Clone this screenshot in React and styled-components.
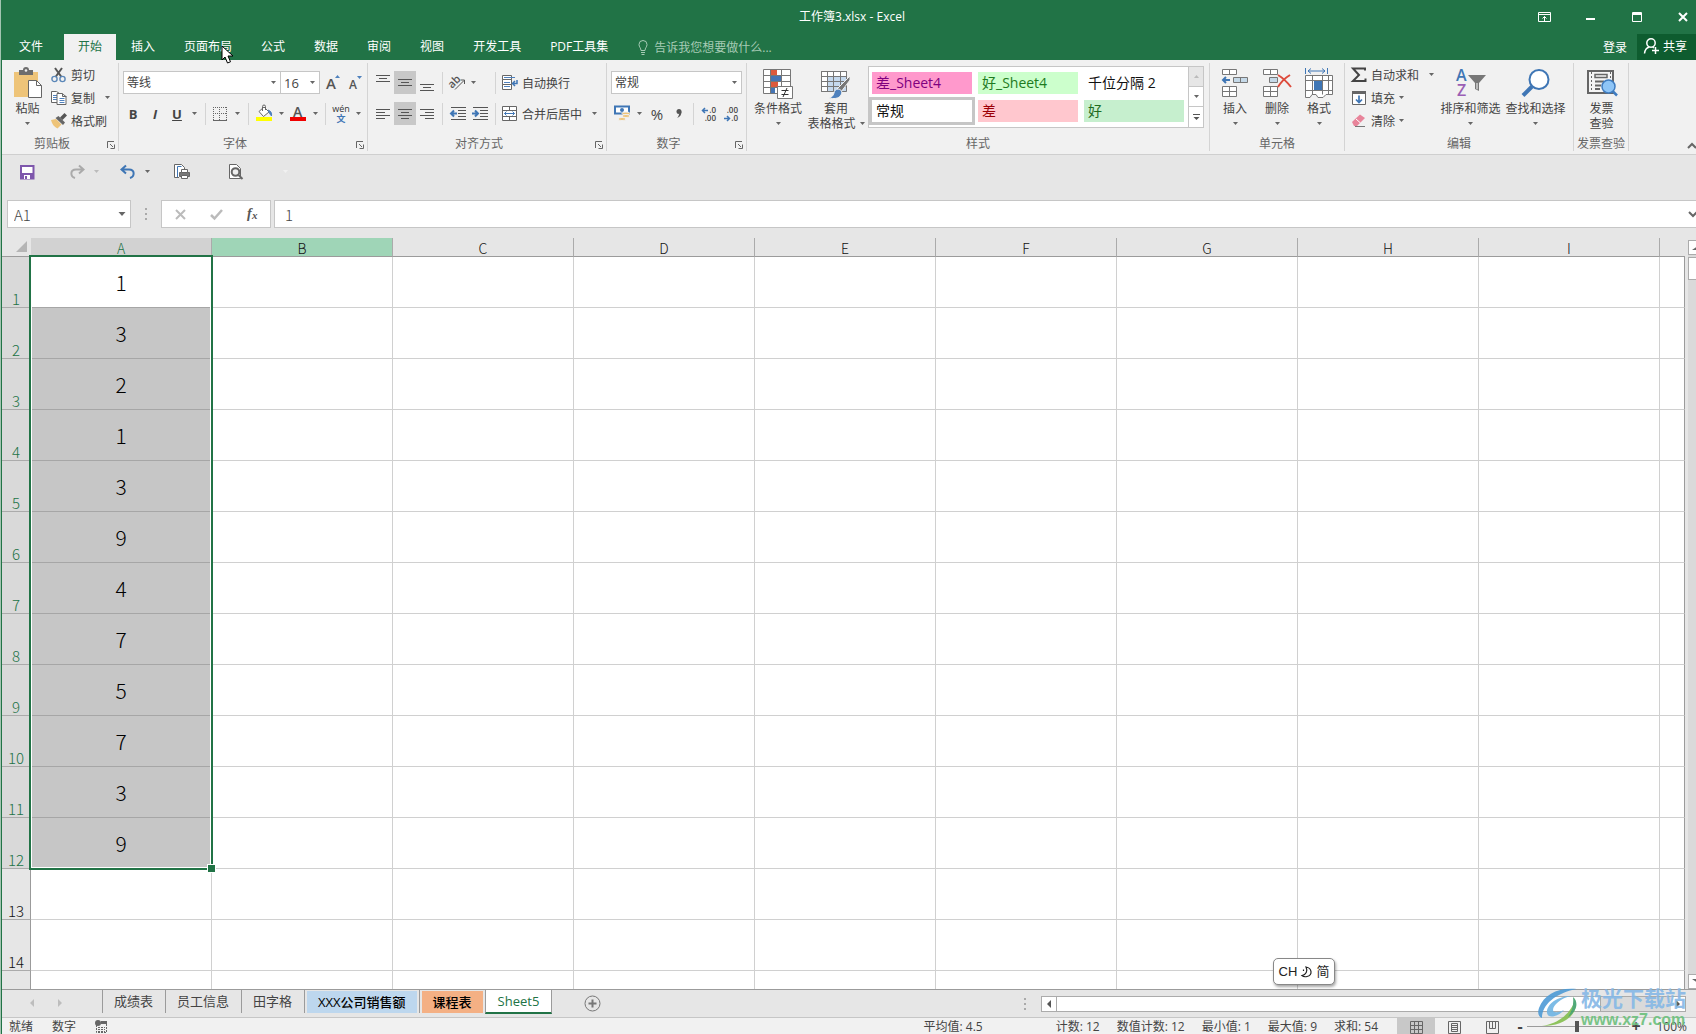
import React, { useState } from "react";
import styled, { createGlobalStyle, css } from "styled-components";

const UI_FONT = `"Open Sans", "Noto Sans CJK SC", sans-serif`;
const CELL_FONT = `"Noto Sans CJK SC", "Noto Sans", sans-serif`;

const GlobalStyle = createGlobalStyle`
  * {
    box-sizing: border-box;
  }
  body {
    margin: 0;
    font-family: ${UI_FONT};
    font-size: 12px;
    color: #444;
    background: #a3c4b1;
    overflow: hidden;
  }
  button, input, select {
    font: inherit;
    color: inherit;
    margin: 0;
    padding: 0;
    border: 0;
    background: none;
    border-radius: 0;
    outline: none;
  }
  svg {
    display: block;
    flex: none;
    overflow: visible;
  }
`;

const Window = styled.div`
  position: relative;
  display: flex;
  flex-direction: column;
  height: 100vh;
  margin-left: 1px;
  overflow: hidden;
  border-left: 1px solid #217346;
  background: #e6e6e6;
`;

/* ---------- title bar and tabs ---------- */

const TitleBar = styled.header`
  display: grid;
  grid-template-columns: 1fr auto 1fr;
  align-items: center;
  height: 34px;
  padding-left: 6px;
  background: #217346;
  color: #fff;
`;

const Title = styled.h1`
  grid-column: 2;
  margin: 0;
  font-size: 12px;
  font-weight: 400;
  line-height: 16px;
`;

const WindowButtons = styled.div`
  display: flex;
  justify-content: flex-end;
`;

const WindowButton = styled.button`
  display: flex;
  justify-content: center;
  align-items: center;
  width: 46px;
  height: 32px;
`;

const CloseButton = styled(WindowButton)`
  justify-content: flex-end;
  width: 36px;
  padding-right: 8px;
`;

const TabBar = styled.nav`
  display: flex;
  height: 26px;
  gap: 1px;
  background: #217346;
  color: #fff;
`;

const Tab = styled.button`
  padding: 0 14px 2px;
  white-space: nowrap;
  ${(p) =>
    p.$active &&
    css`
      background: #f1f1f1;
      color: #217346;
    `}
`;

const FileTab = styled(Tab)`
  padding: 0 20px 2px 17px;
`;

const TellMe = styled.label`
  display: flex;
  flex: 1;
  align-items: center;
  gap: 6px;
  padding-left: 15px;
  color: #a6cbb5;

  input {
    width: 160px;
  }
  input::placeholder {
    color: #a6cbb5;
    opacity: 1;
  }
`;

const ShareButton = styled.button`
  display: flex;
  align-items: center;
  gap: 4px;
  padding: 0 9px 2px 7px;
  background: #0e5c2f;
`;

const SignIn = styled.button`
  padding: 0 9px 1px;
`;

/* ---------- ribbon ---------- */

const Ribbon = styled.section`
  display: flex;
  height: 95px;
  background: #f1f1f1;
  border-bottom: 1px solid #cfcfcf;
`;

const GroupBox = styled.div`
  display: flex;
  flex-direction: column;
  flex: none;
  width: ${(p) => p.$w}px;
  margin: 3px 0;
  border-right: 1px solid #d4d4d4;
`;

const GroupBody = styled.div`
  display: flex;
  flex: 1;
  padding-left: ${(p) => p.$left || 4}px;
`;

const GroupFooter = styled.div`
  display: flex;
  height: 15px;
  align-items: center;
`;

const GroupName = styled.span`
  flex: 1;
  text-align: center;
  line-height: 15px;
  color: #666;
  white-space: nowrap;
`;

const Launcher = styled.button`
  width: 16px;
  padding: 3px 0 0 5px;
`;

const ToolRows = styled.div`
  display: flex;
  flex-direction: column;
  gap: 8px;
  padding-top: 8px;
`;

const ToolRow = styled.div`
  display: flex;
  align-items: center;
  height: 23px;
`;

const Tool = styled.button`
  display: flex;
  align-items: center;
  justify-content: center;
  flex: none;
  width: ${(p) => p.$w || 22}px;
  height: 23px;
  background: ${(p) => (p.$on ? "#c8c8c8" : "none")};
`;

const Letter = styled(Tool)`
  font-size: 13px;
  font-weight: 700;
  font-style: ${(p) => (p.$italic ? "italic" : "normal")};
  text-decoration: ${(p) => (p.$underline ? "underline" : "none")};
`;

const Percent = styled(Tool)`
  font-size: 15px;
`;

const OrientGroup = styled.div`
  display: flex;
  width: 44px;
`;

const Sep = styled.span`
  flex: none;
  width: 1px;
  height: 22px;
  margin: 0 4px;
  background: #d4d4d4;
`;

const LabelTool = styled.button`
  display: flex;
  align-items: center;
  gap: 4px;
  height: 23px;
  padding-left: 2px;
  white-space: nowrap;
`;

const SmallColumn = styled.div`
  display: flex;
  flex-direction: column;
  align-items: flex-start;
  flex: none;
  width: ${(p) => p.$w}px;
`;

const BigButton = styled.button`
  display: flex;
  flex-direction: column;
  align-items: center;
  flex: none;
  width: ${(p) => p.$w}px;
  height: 68px;
  line-height: 15px;
  white-space: nowrap;
`;

const BigIcon = styled.span`
  display: flex;
  align-items: center;
  justify-content: center;
  height: 38px;
  padding-top: 2px;
`;

const LabelLine = styled.span`
  display: flex;
  align-items: center;
  gap: 4px;
  height: 15px;
`;

const SelectBox = styled.div`
  display: grid;
  flex: none;
  width: ${(p) => p.$w}px;
  height: 23px;
  margin-right: -1px;
  border: 1px solid #c6c6c6;
  background: #fff;

  select {
    grid-area: 1 / 1;
    appearance: none;
    padding-left: 3px;
    font-size: ${(p) => p.$size || 12}px;
  }
  svg {
    grid-area: 1 / 1;
    place-self: center end;
    margin-right: 4px;
    pointer-events: none;
  }
`;

const Gallery = styled.div`
  display: flex;
  flex: none;
  margin: 3px 0 0 2px;
  height: 62px;
  border: 1px solid #c6c6c6;
  background: #fff;
`;

const StyleGrid = styled.div`
  display: grid;
  grid-template-columns: repeat(3, 106px);
  grid-template-rows: repeat(2, 28px);
  padding: 2px 1px 2px 0;
`;

const StyleItem = styled.button`
  padding-left: 4px;
  border: 3px solid ${(p) => (p.$selected ? "#c6c6c6" : "#fff")};
  background: ${(p) => p.$bg};
  color: ${(p) => p.$fg};
  font-size: 14px;
  line-height: 20px;
  text-align: left;
`;

const GalleryButtons = styled.div`
  display: grid;
  grid-template-rows: repeat(3, 20px);
  width: 15px;
`;

const GalleryButton = styled.button`
  display: flex;
  align-items: center;
  justify-content: center;
  border-left: 1px solid #c6c6c6;
  border-bottom: 1px solid #c6c6c6;
  background: ${(p) => (p.$dim ? "#e6e6e6" : "#fff")};

  &:last-child {
    border-bottom: 0;
  }
`;

const Collapse = styled.button`
  margin-left: auto;
  align-self: flex-end;
  padding: 0 0 5px;
`;

/* ---------- quick access and formula bar ---------- */

const QuickAccess = styled.div`
  display: flex;
  align-items: center;
  height: 45px;
  padding: 0 0 12px 10px;
`;

const QuickItem = styled.div`
  display: flex;
  margin-right: ${(p) => p.$gap || 0}px;
`;

const FormulaBar = styled.div`
  display: flex;
  height: 28px;
  padding-left: 5px;
`;

const NameBox = styled.div`
  display: flex;
  align-items: center;
  width: 124px;
  border: 1px solid #c6c6c6;
  background: #fff;

  input {
    flex: 1;
    min-width: 0;
    padding-left: 6px;
    font-size: 15px;
    font-family: ${CELL_FONT};
    font-weight: 300;
  }
  svg {
    margin-right: 4px;
  }
`;

const Dots = styled.div`
  display: flex;
  flex-direction: column;
  justify-content: center;
  align-items: center;
  gap: 3px;
  width: ${(p) => p.$w}px;

  i {
    width: 2px;
    height: 2px;
    background: #aaa;
  }
`;

const FormulaButtons = styled.div`
  display: flex;
  align-items: center;
  width: 110px;
  border: 1px solid #c6c6c6;
  background: #fff;
`;

const FormulaField = styled.div`
  display: flex;
  flex: 1;
  align-items: center;
  margin-left: 3px;
  border: 1px solid #c6c6c6;
  border-right: 0;
  background: #fff;

  input {
    flex: 1;
    padding-left: 10px;
    font-size: 15px;
    font-family: ${CELL_FONT};
    font-weight: 300;
  }
`;

/* ---------- sheet ---------- */

const SheetArea = styled.main`
  display: flex;
  flex: 1;
  min-height: 0;
  padding-top: 10px;
`;

const GridPane = styled.div`
  position: relative;
  flex: 1;
  min-width: 0;
  overflow: hidden;
`;

const SheetTable = styled.table`
  width: 100%;
  height: 100%;
  table-layout: fixed;
  border-collapse: separate;
  border-spacing: 0;
  font-family: ${CELL_FONT};
  font-weight: 300;
`;

const Corner = styled.td`
  width: 29px;
  height: 19px;
  padding: 0 4px 4px 0;
  border-bottom: 1px solid #9b9b9b;
  vertical-align: bottom;

  svg {
    margin-left: auto;
  }
`;

const ColumnHead = styled.th`
  width: ${(p) => (p.$rest ? "auto" : "181px")};
  height: 19px;
  padding: 2px 0 0;
  border-right: ${(p) => (p.$rest ? 0 : 1)}px solid #ababab;
  border-bottom: 1px solid #9b9b9b;
  background: ${(p) => p.$bg || "#e6e6e6"};
  color: ${(p) => p.$fg || "#111"};
  font-size: 14px;
  font-weight: 300;
  line-height: 16px;
`;

const RowHead = styled.th`
  height: 51px;
  padding: 0;
  border-right: 1px solid #9b9b9b;
  border-bottom: 1px solid #ababab;
  background: ${(p) => (p.$selected ? "#d9d9d9" : "#e6e6e6")};
  color: ${(p) => (p.$selected ? "#217346" : "#111")};
  font-size: 15px;
  font-weight: 300;
  line-height: 16px;
  vertical-align: bottom;
`;

const Cell = styled.td`
  height: 51px;
  padding: 0;
  border-right: 1px solid #d0d0d0;
  border-bottom: 1px solid ${(p) => (p.$selected ? "#a6a6a6" : "#d0d0d0")};
  background: ${(p) => (p.$selected && !p.$current ? "#c6c6c6" : "#fff")};
  color: #000;
  font-size: 21px;
  line-height: 30px;
  text-align: center;

  &:last-child {
    border-right-color: #9b9b9b;
  }
`;

const RestHead = styled(RowHead)`
  height: auto;
  border-bottom: 0;
`;

const RestCell = styled(Cell)`
  height: auto;
  border-bottom: 0;
`;

const Selection = styled.div`
  position: absolute;
  left: 27px;
  top: 17px;
  width: 184px;
  height: ${(p) => p.$rows * 51 + 3}px;
  border: 2px solid #217346;
  pointer-events: none;

  &::before {
    content: "";
    position: absolute;
    inset: 0;
    border: 1px solid #fff;
  }
  &::after {
    content: "";
    position: absolute;
    right: -5px;
    bottom: -5px;
    width: 7px;
    height: 7px;
    border: 1px solid #fff;
    background: #217346;
  }
`;

const VScroll = styled.div`
  display: flex;
  flex-direction: column;
  flex: none;
  width: 8px;
  margin: 2px 0 0 3px;
  background: #dadada;
`;

const VButton = styled.button`
  height: 15px;
  border: 1px solid #ababab;
  border-right: 0;
  background: #fff;
  overflow: hidden;
`;

const VThumb = styled.div`
  height: 23px;
  margin: 2px 0 auto;
  border: 1px solid #ababab;
  border-right: 0;
  background: #fff;
`;

const SheetStrip = styled.div`
  display: flex;
  height: 28px;
  border-top: 1px solid #9b9b9b;
`;

const SheetNav = styled.div`
  display: flex;
  align-items: center;
  gap: 24px;
  width: 100px;
  padding: 0 0 2px 28px;
`;

const SheetTab = styled.button`
  height: 23px;
  padding: 0 12px 1px 11px;
  border-left: 1px solid #9b9b9b;
  font-size: 13px;
  line-height: 22px;
  white-space: nowrap;

  ${(p) =>
    p.$bg &&
    css`
      padding: 0 2px;
      color: #000;
      font-weight: 500;

      span {
        display: block;
        padding: 0 11px;
        background: ${p.$bg};
      }
    `}

  ${(p) =>
    p.$active &&
    css`
      height: 24px;
      padding: 0 12px;
      border-right: 1px solid #9b9b9b;
      border-bottom: 2px solid #217346;
      background: #fff;
      color: #217346;
    `}
`;

const AddSheet = styled.button`
  display: flex;
  align-items: center;
  margin-left: 32px;
`;

const SheetSpacer = styled.div`
  flex: 1;
`;

const HScroll = styled.div`
  display: flex;
  width: 645px;
  height: 16px;
  margin: 6px 10px 0 8px;
  border: 1px solid #ababab;
  background: #dadada;
`;

const HButton = styled.button`
  display: flex;
  align-items: center;
  justify-content: center;
  width: 14px;
  background: #fff;
`;

const HThumb = styled.div`
  width: 545px;
  margin-right: auto;
  border: 0 solid #ababab;
  border-width: 0 1px;
  background: #fff;
`;

const StatusBar = styled.footer`
  display: flex;
  align-items: center;
  height: 17px;
  padding: 0 9px 0 7px;
  border-top: 1px solid #c6c6c6;
  background: #f1f1f1;
  line-height: 16px;
  white-space: nowrap;
`;

const StatusText = styled.span`
  padding-top: 2px;
`;

const Mode = styled(StatusText)`
  margin-right: 19px;
`;

const Stats = styled.div`
  display: flex;
  gap: 17px;
  margin-left: auto;
  padding-right: 19px;
`;

const Average = styled(StatusText)`
  margin-right: 56px;
`;

const ViewButton = styled.button`
  display: flex;
  align-items: center;
  justify-content: center;
  width: 38px;
  height: 16px;
  padding-top: 2px;
  background: ${(p) => (p.$on ? "#c8c8c8" : "none")};
`;

const ZoomControl = styled.div`
  display: flex;
  align-items: center;
  margin-left: 4px;
`;

const ZoomButton = styled.button`
  width: 10px;
  font-size: 16px;
  font-weight: 700;
  line-height: 16px;
`;

const ZoomSlider = styled.input`
  appearance: none;
  width: 102px;
  height: 16px;
  margin: 0 2px;
  background: linear-gradient(#9b9b9b, #9b9b9b) center / 100% 1px no-repeat;

  &::-webkit-slider-thumb {
    appearance: none;
    width: 4px;
    height: 11px;
    background: #555;
  }
`;

const ZoomValue = styled.button`
  width: 46px;
  padding-top: 2px;
  text-align: right;
  font-size: 12px;
`;

/* ---------- things floating over the window ---------- */

const Pointer = styled.svg`
  position: absolute;
  left: 219px;
  top: 45px;
`;

const ImeBadge = styled.div`
  position: absolute;
  right: 361px;
  bottom: 49px;
  display: flex;
  align-items: center;
  justify-content: center;
  gap: 4px;
  width: 62px;
  height: 27px;
  border: 1px solid #888;
  border-radius: 5px;
  background: #fff;
  box-shadow: 1px 2px 3px rgba(0, 0, 0, 0.35);
  color: #222;
  font: 13px/20px "Liberation Sans", "Noto Sans CJK SC", sans-serif;
`;

const Watermark = styled.div`
  position: absolute;
  right: 10px;
  bottom: 6px;
  display: flex;
  align-items: flex-end;
  gap: 2px;
  pointer-events: none;
`;

const WatermarkText = styled.div`
  display: flex;
  flex-direction: column;
  gap: 2px;
  color: #86b8e6;
  font: 700 21px/24px "Noto Sans CJK SC", sans-serif;
  opacity: 0.9;

  span:last-child {
    color: #6cc07c;
    font: 700 16px/17px "Liberation Sans", sans-serif;
  }
`;

/* ---------- icons ---------- */

const Icon = ({ w = 16, h = w, children, ...rest }) => (
  <svg width={w} height={h} viewBox={`0 0 ${w} ${h}`} fill="none" stroke="#666" aria-hidden="true" {...rest}>
    {children}
  </svg>
);

const Caret = ({ color = "#666", big }) => (
  <Icon w={big ? 8 : 5} h={big ? 4 : 3} stroke="none">
    <path d={big ? "M0.5 0h7L4 4z" : "M0 0h5L2.5 3z"} fill={color} />
  </Icon>
);

// each row is [y, x1, x2]
const Lines = ({ rows }) => (
  <Icon>
    {rows.map(([y, x1, x2]) => (
      <path key={y} d={`M${x1} ${y + 0.5}H${x2}`} stroke="#555" />
    ))}
  </Icon>
);

const PasteIcon = () => (
  <Icon w={30} h={32}>
    <path d="M1 5h24v25H1z" fill="#eec479" stroke="none" />
    <path d="M6 3h4a3 3 0 0 1 6 0h4v5H6z" fill="#6d6d6d" stroke="none" />
    <circle cx="13" cy="3.5" r="1.3" fill="#f1f1f1" stroke="none" />
    <path d="M15.5 13.5h8l5 5v12h-13z" fill="#fff" />
    <path d="M23.5 13.5v5h5" />
  </Icon>
);

const CutIcon = () => (
  <Icon>
    <path d="M4 1l6.5 9M11 1L4.5 10" stroke="#555" strokeWidth="2" />
    <circle cx="3.5" cy="12" r="2.6" stroke="#5b87b8" strokeWidth="1.4" />
    <circle cx="11.5" cy="12" r="2.6" stroke="#5b87b8" strokeWidth="1.4" />
  </Icon>
);

const CopyIcon = () => (
  <Icon>
    <path d="M0.5 1.5h5l3 2v9h-8z" fill="#fff" />
    <path d="M2 5.5h4M2 7.5h4M2 9.5h4" stroke="#4f81bd" />
    <path d="M6 3.5h5l4 3v8h-9z" fill="#fff" />
    <path d="M11.5 3.5v3h4" />
    <path d="M8.5 8.5h5M8.5 10.5h5M8.5 12.5h5" stroke="#4f81bd" />
  </Icon>
);

const BrushIcon = () => (
  <Icon stroke="none">
    <path d="M0 7l5-1 5.500 5.500-4 4C3 14 1 11 0 7z" fill="#eec479" />
    <path d="M4.500 5l3-2 6.500 6.500-2 2.500z" fill="#666" />
    <path d="M9 4.500l4.500-4.500 2.500 2.500-4.500 4.500z" fill="#555" />
  </Icon>
);

const LauncherIcon = () => (
  <Icon w={8}>
    <path d="M0.5 7V0.5H7M3 3l3 3M7.500 3.500v4h-4" />
  </Icon>
);

const GrowIcon = ({ down }) => (
  <Icon w={16} h={18} stroke="none">
    <text x="1" y="15" fontSize={down ? 12 : 15} fontWeight="600" fill="#555">A</text>
    <path d={down ? "M9 2h5l-2.500 3z" : "M10 4h5l-2.500-3z"} fill="#4f81bd" />
  </Icon>
);

const BorderIcon = () => (
  <Icon w={14} stroke="#666" strokeDasharray="1 1">
    <path d="M0 0.5h14M0 6.500h14M0.5 0v13M6.500 0v13M13.500 0v13" />
    <path d="M0 13.500h14" strokeDasharray="none" />
  </Icon>
);

const FillColorIcon = () => (
  <Icon w={17}>
    <path d="M3 6.500l5-4.500 5 5-5.500 4.500z" fill="#fff" />
    <path d="M6.500 6V1.500a1.500 1.500 0 0 1 3 0V5" />
    <path d="M12 5c3 1 4 3 3.500 6-1-1.500-2-2-2.500-4z" fill="#4f81bd" stroke="#4f81bd" />
    <path d="M0 12h16v4H0z" fill="#ffff00" stroke="none" />
  </Icon>
);

const FontColorIcon = () => (
  <Icon w={17} stroke="none">
    <text x="3" y="11.500" fontSize="14" fontWeight="600" fill="#555">A</text>
    <path d="M0 12h16v4H0z" fill="#f00000" />
  </Icon>
);

const PinyinIcon = () => (
  <Icon w={20} h={18} stroke="none">
    <text x="10" y="7" fontSize="9" textAnchor="middle" fill="#333">wén</text>
    <text x="10" y="17" fontSize="9" fontWeight="700" textAnchor="middle" fill="#3f76b5">文</text>
  </Icon>
);

const OrientIcon = () => (
  <Icon w={17} h={17}>
    <text x="0" y="12" fontSize="11" fontWeight="600" fill="#555" stroke="none" transform="rotate(-45 5 10)">ab</text>
    <path d="M6 15.500l9-9M11.500 6h4v4" stroke="#555" />
  </Icon>
);

const IndentIcon = ({ inc }) => (
  <Icon>
    <path d="M1 1.500h15M8 4.500h8M8 7.500h8M8 10.500h8M1 13.500h15" stroke="#555" />
    <path d={inc ? "M0 7.500h5M3 4.500l3 3-3 3" : "M7 7.500H2M4 4.500l-3 3 3 3"} stroke="#3f76b5" strokeWidth="2" />
  </Icon>
);

const WrapIcon = () => (
  <Icon>
    <path d="M0.5 0.5h9v4h-9zM0.5 4.500h9v5h-9zM0.5 9.500h9v5h-9z" fill="#fff" />
    <path d="M2 2.500h11M2 7.500h6M2 11.500h6" stroke="#4f81bd" />
    <path d="M15 5v3.500h-4M13 6l-2.500 2.500L13 11" stroke="#3f76b5" strokeWidth="1.500" />
  </Icon>
);

const MergeIcon = () => (
  <Icon>
    <path d="M0.5 0.5h14v14h-14zM0.500 4.500h14M0.500 10.500h14M7.500 0.500v4M7.500 10.500v4" fill="#fff" />
    <path d="M2.500 7.500h10M4.500 5.500l-2 2 2 2M10.500 5.500l2 2-2 2" stroke="#3f76b5" />
  </Icon>
);

const CurrencyIcon = () => (
  <Icon w={17} h={17}>
    <path d="M1 1.500h14v7H1z" fill="#fff" stroke="#3f76b5" strokeWidth="2" />
    <circle cx="8" cy="5" r="2" fill="#3f76b5" stroke="none" />
    <ellipse cx="12" cy="8.500" rx="4" ry="1.500" fill="#eec479" stroke="#f1f1f1" />
    <ellipse cx="12" cy="11" rx="4" ry="1.500" fill="#eec479" stroke="#f1f1f1" />
    <ellipse cx="8" cy="14" rx="4" ry="1.500" fill="#eec479" stroke="#f1f1f1" />
  </Icon>
);

const CommaIcon = () => (
  <Icon w={6} h={9} stroke="none">
    <circle cx="3" cy="2.500" r="2.500" fill="#555" />
    <path d="M5.500 2.500C5.500 6 4 8 1 9c1-1 2-2.500 2-4z" fill="#555" />
  </Icon>
);

const DecimalIcon = ({ less }) => (
  <Icon w={16} h={16} stroke="none" fontSize="8" fontWeight="600">
    <text x="15" y="7" textAnchor="end" fill="#444">{less ? ".00" : ".0"}</text>
    <text x="15" y="15" textAnchor="end" fill="#444">{less ? ".0" : ".00"}</text>
    <path
      d={less ? "M1 12.500h5M4 10l2.500 2.500L4 15" : "M7 4.500H2M4 2L1.500 4.500 4 7"}
      fill="none"
      stroke="#3f76b5"
      strokeWidth="1.500"
    />
  </Icon>
);

const CondFormatIcon = () => (
  <Icon w={30} h={32} stroke="#777">
    <path d="M0.500 2.500h27v24h-27z" fill="#fff" />
    <path d="M8 3h6v5H8zM8 15h7v5H8z" fill="#dd5a3c" stroke="none" />
    <path d="M8 9h10v5H8zM8 21h4v5H8z" fill="#4575b4" stroke="none" />
    <path d="M0.500 8.500h27M0.500 14.500h27M0.500 20.500h27M7.500 2v24M18.500 2v24" />
    <path d="M14.500 19.500h15v12h-15z" fill="#fff" />
    <path d="M18.500 23.500h7M18.500 27.500h7M24 21l-4 9" stroke="#333" />
  </Icon>
);

const TableFormatIcon = () => (
  <Icon w={30} h={32} stroke="#777">
    <path d="M0.500 4.500h25v20h-25z" fill="#fff" />
    <path d="M7 10h19v15H7z" fill="#c5d9ee" stroke="none" />
    <path d="M0.500 4.500h25v20h-25zM0.500 9.500h25M0.500 14.500h25M0.500 19.500h25M6.500 4v20M12.500 4v20M19.500 4v20" />
    <path d="M29 9v4L20 25l-4-3z" fill="#777" stroke="#f1f1f1" />
    <path d="M17 22c3 0 5 3 3 6-2 4-8 4-12 3 3-1 4-2 5-5 0-2 2-4 4-4z" fill="#4f81bd" stroke="#f1f1f1" />
  </Icon>
);

const InsertIcon = () => (
  <Icon w={28} h={30} stroke="#777">
    <path d="M1.500 1.500h14v5h-14zM8.500 1.500v5M1.500 18.500h14v10h-14zM1.500 23.500h14M8.500 18.500v10" fill="#fff" />
    <path d="M12.500 9.500h14v5h-14zM19.500 9.500v5" fill="#c5d9e8" />
    <path d="M2 12h7M5 9l-3 3 3 3" stroke="#3f76b5" strokeWidth="2" />
  </Icon>
);

const DeleteIcon = () => (
  <Icon w={30} h={30} stroke="#777">
    <path d="M1.500 1.500h14v5h-14zM8.500 1.500v5M1.500 18.500h14v10h-14zM1.500 23.500h14M8.500 18.500v10" fill="#fff" />
    <path d="M7.500 9.500h8v5h-8z" fill="#c5d9e8" />
    <path d="M16 7c5 3 9 7 13 12M28 7c-5 3-9 7-12 12" stroke="#dd4b3c" strokeWidth="2" />
  </Icon>
);

const FormatIcon = () => (
  <Icon w={30} h={32} stroke="#777">
    <path d="M1.500 8.500h27v19H22l-3 3h-5l-2-3H8l-2 3H1.500z" fill="#fff" />
    <path d="M1.500 13.500h27M1.500 23.500h27M8.500 8.500v19M18.500 8.500v19M24.500 8.500v19" />
    <path d="M10 14h8v9h-8z" fill="#3f76b5" stroke="none" />
    <path d="M1.500 1v6M23.500 1v6M4 4h17M7 1.500L4 4l3 2.500M18 1.500L21 4l-3 2.500" stroke="#3f76b5" />
  </Icon>
);

const SumIcon = () => (
  <Icon>
    <path d="M14 3.500V1.500H2l6 6.500-6 6h12.500v-2.500" stroke="#444" strokeWidth="2" />
  </Icon>
);

const FillDownIcon = () => (
  <Icon>
    <path d="M1.500 1.500h13v13h-13z" fill="#fff" />
    <path d="M1 1h14v3H1z" fill="#666" stroke="none" />
    <path d="M8 5.500v7M5 9.500l3 3 3-3" stroke="#3f76b5" strokeWidth="1.700" />
  </Icon>
);

const EraserIcon = () => (
  <Icon>
    <path d="M1 9l8-7.500 5 3.500-8 8H3z" fill="#e8849a" stroke="none" />
    <path d="M5 6l4.500 4" stroke="#fff" />
    <path d="M4 13.500h10" stroke="#777" />
  </Icon>
);

const SortIcon = () => (
  <Icon w={30} h={30} stroke="none">
    <text x="0" y="13" fontSize="16" fontWeight="600" fill="#3f76b5">A</text>
    <text x="1" y="28" fontSize="16" fontWeight="600" fill="#9a5fb5">Z</text>
    <path d="M12 7h18l-7 8v8l-4-2v-6z" fill="#777" />
    <path d="M20.500 15v6l1 0.500V15z" fill="#fff" />
  </Icon>
);

const FindIcon = () => (
  <Icon w={28} h={28} stroke="#3f76b5">
    <path d="M1 26.500l9-9" strokeWidth="4" />
    <circle cx="17" cy="10.500" r="9.500" fill="#fff" strokeWidth="2" />
  </Icon>
);

const InvoiceIcon = () => (
  <Icon w={32} h={30} stroke="#666">
    <path d="M2 3h25v22H2z" fill="#f4f4f4" strokeWidth="2" />
    <path d="M5.500 4v20M24.500 4v10" strokeDasharray="2 2" />
    <path d="M9 6.500h12v3H9z" strokeWidth="1.500" />
    <path d="M9 13.500h9M9 17.500h6M9 21h5" strokeWidth="2" />
    <circle cx="22.500" cy="18.500" r="6.500" fill="#8ec5f7" stroke="#3f7cc0" strokeWidth="1.500" />
    <path d="M27 23.500l4 4" stroke="#3f7cc0" strokeWidth="2.500" />
  </Icon>
);

const SaveIcon = () => (
  <Icon>
    <path d="M2 2h12.500v12.500H2z" fill="#fff" stroke="#7e57ac" strokeWidth="2" />
    <path d="M1 9h14v6H1z" fill="#7e57ac" stroke="none" />
    <path d="M5 11h6v4H5z" fill="#fff" stroke="none" />
    <path d="M6 12h2v3H6z" fill="#7e57ac" stroke="none" />
  </Icon>
);

const ArrowIcon = ({ redo }) => (
  <Icon stroke={redo ? "#aaa" : "#3f76b5"} strokeWidth="2">
    <path
      d={redo ? "M14 5.500H7c-6 0-6 7-1 8.500M10 1.500l4.500 4-4.500 4" : "M2 5.500h7c6 0 6 7 1 8.500M6 1.500L1.500 5.500l4.500 4"}
    />
  </Icon>
);

const PrintIcon = () => (
  <Icon w={18} h={17}>
    <path d="M6 14.500H1.500v-13h7l3 3V7" fill="#fff" />
    <path d="M4.500 14V3.500h4" stroke="#3f76b5" />
    <path d="M6.500 9.500h10v4h-10z" fill="#777" />
    <path d="M8.500 6.500h6v3h-6zM8.500 12.500h6v3h-6z" fill="#fff" />
  </Icon>
);

const PreviewIcon = () => (
  <Icon w={16} h={17}>
    <path d="M1.500 1.500h7l4 4v10h-11z" fill="#fff" />
    <circle cx="7.500" cy="9" r="3.800" fill="#eee" strokeWidth="2" />
    <path d="M10.500 12l4 4" strokeWidth="2" />
  </Icon>
);

const SheetNavArrow = ({ next }) => (
  <Icon w={4} h={8} stroke="none">
    <path d={next ? "M0 0l4 4-4 4z" : "M4 0v8L0 4z"} fill="#bdbdbd" />
  </Icon>
);

const Swoosh = () => (
  <Icon w={42} h={40} stroke="none" opacity="0.9">
    <path d="M40 1C22-1 7 6 2 20c-2 6 0 9 3 10C5 17 18 5 40 1z" fill="#4e9bd6" />
    <path d="M34 8C20 8 9 17 10 25c1 6 11 4 17-3-6 3-11 3-11 0 0-5 8-12 18-14z" fill="#6fb5e4" />
    <path d="M38 12c4 13-9 26-33 26 13-2 27-9 33-26z" fill="#84bf4e" />
    <path d="M36 9c6 5 4 14-5 20 4-6 6-12 5-20z" fill="#3fa06a" />
  </Icon>
);

/* ---------- data ---------- */

const TABS = ["开始", "插入", "页面布局", "公式", "数据", "审阅", "视图", "开发工具", "PDF工具集"];
const COLUMNS = ["A", "B", "C", "D", "E", "F", "G", "H", "I"];
const VALUES = [1, 3, 2, 1, 3, 9, 4, 7, 5, 7, 3, 9];
const ROW_COUNT = 14;

const STYLES = [
  { name: "差_Sheet4", bg: "#ff99cc", fg: "#800080" },
  { name: "好_Sheet4", bg: "#ccffcc", fg: "#1e7b1e" },
  { name: "千位分隔 2", bg: "#fff", fg: "#111" },
  { name: "常规", bg: "#fff", fg: "#111", selected: true },
  { name: "差", bg: "#ffc7ce", fg: "#9c0006" },
  { name: "好", bg: "#c6efce", fg: "#1e6b1e" },
];

const SHEETS = [
  { name: "成绩表" },
  { name: "员工信息" },
  { name: "田字格" },
  { name: "XXX公司销售额", bg: "#bdd7ee" },
  { name: "课程表", bg: "#f4b084" },
  { name: "Sheet5" },
];

const ALIGN_TOP = [[0, 1, 15], [3, 4, 12], [6, 1, 15]];
const ALIGN_MIDDLE = [[4, 1, 15], [7, 4, 12], [10, 1, 15]];
const ALIGN_BOTTOM = [[9, 1, 15], [12, 4, 12], [15, 1, 15]];
const ALIGN_LEFT = [[3, 1, 15], [6, 1, 10], [9, 1, 15], [12, 1, 10]];
const ALIGN_CENTER = [[3, 1, 15], [6, 4, 12], [9, 1, 15], [12, 4, 12]];
const ALIGN_RIGHT = [[3, 1, 15], [6, 6, 15], [9, 1, 15], [12, 6, 15]];

const HEAD_COLORS = {
  A: { bg: "#d2d2d2", fg: "#217346" },
  B: { bg: "#9fd5b7", fg: "#111" },
};

/* ---------- parts ---------- */

const Group = ({ name, w, left, launcher, children }) => (
  <GroupBox $w={w}>
    <GroupBody $left={left}>{children}</GroupBody>
    <GroupFooter>
      <GroupName>{name}</GroupName>
      {launcher && (
        <Launcher aria-label={name}>
          <LauncherIcon />
        </Launcher>
      )}
    </GroupFooter>
  </GroupBox>
);

const Big = ({ icon, label, second, w, caret = true }) => (
  <BigButton $w={w}>
    <BigIcon>{icon}</BigIcon>
    <LabelLine>{label}</LabelLine>
    <LabelLine>
      {second}
      {caret && <Caret />}
    </LabelLine>
  </BigButton>
);

const Drop = ({ w = 12, label, color }) => (
  <Tool $w={w} aria-label={label}>
    <Caret color={color} />
  </Tool>
);

const Dropdown = ({ w, label, value, size }) => (
  <SelectBox $w={w} $size={size}>
    <select aria-label={label} defaultValue={value}>
      <option>{value}</option>
    </select>
    <Caret />
  </SelectBox>
);

const RibbonBar = () => (
  <Ribbon>
    <Group name="剪贴板" w={117} left={4} launcher>
      <Big icon={<PasteIcon />} label="粘贴" w={43} />
      <SmallColumn $w={68}>
        <LabelTool><CutIcon />剪切</LabelTool>
        <ToolRow>
          <LabelTool><CopyIcon />复制</LabelTool>
          <Drop w={24} label="复制选项" />
        </ToolRow>
        <LabelTool><BrushIcon />格式刷</LabelTool>
      </SmallColumn>
    </Group>

    <Group name="字体" w={249} launcher>
      <ToolRows>
        <ToolRow>
          <Dropdown w={158} label="字体" value="等线" />
          <Dropdown w={40} label="字号" value="16" size={13} />
          <Tool $w={28} aria-label="增大字号"><GrowIcon /></Tool>
          <Tool $w={18} aria-label="减小字号"><GrowIcon down /></Tool>
        </ToolRow>
        <ToolRow>
          <Letter $w={20}>B</Letter>
          <Letter $w={24} $italic>I</Letter>
          <Letter $w={20} $underline>U</Letter>
          <Drop w={14} label="下划线" />
          <Sep />
          <Tool $w={20} aria-label="边框"><BorderIcon /></Tool>
          <Drop w={14} label="边框选项" />
          <Sep />
          <Tool aria-label="填充颜色"><FillColorIcon /></Tool>
          <Drop label="填充颜色选项" />
          <Tool aria-label="字体颜色"><FontColorIcon /></Tool>
          <Drop label="字体颜色选项" />
          <Sep />
          <Tool $w={22} aria-label="拼音"><PinyinIcon /></Tool>
          <Drop label="拼音选项" />
        </ToolRow>
      </ToolRows>
    </Group>

    <Group name="对齐方式" w={239} launcher>
      <ToolRows>
        <ToolRow>
          <Tool aria-label="顶端对齐"><Lines rows={ALIGN_TOP} /></Tool>
          <Tool $on aria-label="垂直居中"><Lines rows={ALIGN_MIDDLE} /></Tool>
          <Tool aria-label="底端对齐"><Lines rows={ALIGN_BOTTOM} /></Tool>
          <Sep />
          <OrientGroup>
            <Tool $w={20} aria-label="方向"><OrientIcon /></Tool>
            <Drop label="方向选项" />
          </OrientGroup>
          <Sep />
          <LabelTool><WrapIcon />自动换行</LabelTool>
        </ToolRow>
        <ToolRow>
          <Tool aria-label="左对齐"><Lines rows={ALIGN_LEFT} /></Tool>
          <Tool $on aria-label="居中"><Lines rows={ALIGN_CENTER} /></Tool>
          <Tool aria-label="右对齐"><Lines rows={ALIGN_RIGHT} /></Tool>
          <Sep />
          <Tool aria-label="减少缩进量"><IndentIcon /></Tool>
          <Tool aria-label="增加缩进量"><IndentIcon inc /></Tool>
          <Sep />
          <LabelTool><MergeIcon />合并后居中</LabelTool>
          <Drop w={24} label="合并选项" />
        </ToolRow>
      </ToolRows>
    </Group>

    <Group name="数字" w={140} launcher>
      <ToolRows>
        <Dropdown w={131} label="数字格式" value="常规" />
        <ToolRow>
          <Tool aria-label="会计数字格式"><CurrencyIcon /></Tool>
          <Drop label="会计数字格式选项" />
          <Percent $w={24}>%</Percent>
          <Tool $w={20} aria-label="千位分隔样式"><CommaIcon /></Tool>
          <Sep />
          <Tool aria-label="增加小数位数"><DecimalIcon /></Tool>
          <Tool aria-label="减少小数位数"><DecimalIcon less /></Tool>
        </ToolRow>
      </ToolRows>
    </Group>

    <Group name="样式" w={463} left={3}>
      <Big icon={<CondFormatIcon />} label="条件格式" w={56} />
      <Big icon={<TableFormatIcon />} label="套用" second="表格格式" w={60} />
      <Gallery>
        <StyleGrid>
          {STYLES.map((s) => (
            <StyleItem key={s.name} $bg={s.bg} $fg={s.fg} $selected={s.selected}>
              {s.name}
            </StyleItem>
          ))}
        </StyleGrid>
        <GalleryButtons>
          <GalleryButton $dim aria-label="上一行">
            <Icon w={5} h={3} stroke="none"><path d="M0 3h5L2.500 0z" fill="#bbb" /></Icon>
          </GalleryButton>
          <GalleryButton aria-label="下一行"><Caret /></GalleryButton>
          <GalleryButton aria-label="其他">
            <Icon w={7} h={7} stroke="none"><path d="M0 0h7v1H0zM0.500 3h6l-3 3z" fill="#555" /></Icon>
          </GalleryButton>
        </GalleryButtons>
      </Gallery>
    </Group>

    <Group name="单元格" w={135}>
      <Big icon={<InsertIcon />} label="插入" w={42} />
      <Big icon={<DeleteIcon />} label="删除" w={42} />
      <Big icon={<FormatIcon />} label="格式" w={42} />
    </Group>

    <Group name="编辑" w={229}>
      <SmallColumn $w={89}>
        <ToolRow>
          <LabelTool><SumIcon />自动求和</LabelTool>
          <Drop w={24} label="求和选项" />
        </ToolRow>
        <LabelTool><FillDownIcon />填充<Caret /></LabelTool>
        <LabelTool><EraserIcon />清除<Caret /></LabelTool>
      </SmallColumn>
      <Big icon={<SortIcon />} label="排序和筛选" w={65} />
      <Big icon={<FindIcon />} label="查找和选择" w={65} />
    </Group>

    <Group name="发票查验" w={55} left={1}>
      <Big icon={<InvoiceIcon />} label="发票" second="查验" w={53} caret={false} />
    </Group>

    <Collapse aria-label="折叠功能区">
      <Icon w={9} h={7} strokeWidth="2"><path d="M1 6l4-4 4 4" /></Icon>
    </Collapse>
  </Ribbon>
);

const Sheet = () => (
  <SheetArea>
    <GridPane>
      <SheetTable>
        <thead>
          <tr>
            <Corner>
              <Icon w={11} h={11} stroke="none"><path d="M11 0v11H0z" fill="#b5b5b5" /></Icon>
            </Corner>
            {COLUMNS.map((c) => (
              <ColumnHead key={c} scope="col" $bg={HEAD_COLORS[c]?.bg} $fg={HEAD_COLORS[c]?.fg}>
                {c}
              </ColumnHead>
            ))}
            <ColumnHead $rest />
          </tr>
        </thead>
        <tbody>
          {Array.from({ length: ROW_COUNT }, (_, r) => (
            <tr key={r}>
              <RowHead scope="row" $selected={r < VALUES.length}>{r + 1}</RowHead>
              <Cell $selected={r < VALUES.length} $current={r === 0}>{VALUES[r]}</Cell>
              {COLUMNS.map((c) => (
                <Cell key={c} />
              ))}
            </tr>
          ))}
          <tr>
            <RestHead />
            <RestCell />
            {COLUMNS.map((c) => (
              <RestCell key={c} />
            ))}
          </tr>
        </tbody>
      </SheetTable>
      <Selection $rows={VALUES.length} />
    </GridPane>
    <VScroll>
      <VButton aria-label="向上滚动">
        <Icon w={10} h={5} stroke="none"><path d="M3 5h7V0z" fill="#666" /></Icon>
      </VButton>
      <VThumb />
      <VButton aria-label="向下滚动">
        <Icon w={10} h={5} stroke="none"><path d="M3 0h7v5z" fill="#666" /></Icon>
      </VButton>
    </VScroll>
  </SheetArea>
);

export default function App() {
  const [tab, setTab] = useState("开始");
  const [sheet, setSheet] = useState("Sheet5");
  const [zoom, setZoom] = useState(49);

  return (
    <Window>
      <GlobalStyle />
      <TitleBar>
        <Title>工作簿3.xlsx - Excel</Title>
        <WindowButtons>
          <WindowButton aria-label="功能区显示选项">
            <Icon w={14} h={11} stroke="#fff">
              <path d="M0.500 0.500h12v9h-12zM0.500 2.500h12M6.500 9V4.500M4.500 6.500l2-2 2 2" />
            </Icon>
          </WindowButton>
          <WindowButton aria-label="最小化">
            <Icon w={10} h={10} stroke="#fff" strokeWidth="2"><path d="M0 7h9" /></Icon>
          </WindowButton>
          <WindowButton aria-label="最大化">
            <Icon w={10} h={10} stroke="#fff"><path d="M0.500 0.500h9v9h-9zM0 1.500h10M0 2.500h10" /></Icon>
          </WindowButton>
          <CloseButton aria-label="关闭">
            <Icon w={10} h={10} stroke="#fff" strokeWidth="2"><path d="M1 1l8 8M9 1L1 9" /></Icon>
          </CloseButton>
        </WindowButtons>
      </TitleBar>

      <TabBar>
        <FileTab>文件</FileTab>
        {TABS.map((t) => (
          <Tab key={t} $active={t === tab} onClick={() => setTab(t)}>
            {t}
          </Tab>
        ))}
        <TellMe>
          <Icon w={10} h={15} stroke="#a6cbb5">
            <path d="M3 10.500C3 8 1 7 1 4.500a4 4 0 0 1 8 0C9 7 7 8 7 10.500zM3 12.500h4M3.500 14.500h3" />
          </Icon>
          <input type="text" aria-label="操作说明搜索" placeholder="告诉我您想要做什么..." />
        </TellMe>
        <SignIn>登录</SignIn>
        <ShareButton>
          <Icon w={15} h={16} stroke="#fff" strokeWidth="1.500">
            <circle cx="7" cy="5" r="4.200" />
            <path d="M0.500 15.500C1 11.500 3 9.500 5.500 9M8.500 9l1.500 1M8 12.500h7M11.500 9v7" />
          </Icon>
          共享
        </ShareButton>
      </TabBar>

      <RibbonBar />

      <QuickAccess>
        <QuickItem $gap={20}>
          <Tool $w={30} aria-label="保存"><SaveIcon /></Tool>
        </QuickItem>
        <QuickItem $gap={13}>
          <Tool $w={30} aria-label="恢复"><ArrowIcon redo /></Tool>
          <Drop w={8} label="恢复选项" color="#bbb" />
        </QuickItem>
        <QuickItem $gap={16}>
          <Tool $w={30} aria-label="撤消"><ArrowIcon /></Tool>
          <Drop w={8} label="撤消选项" />
        </QuickItem>
        <QuickItem $gap={24}>
          <Tool $w={30} aria-label="打印"><PrintIcon /></Tool>
        </QuickItem>
        <QuickItem $gap={30}>
          <Tool $w={30} aria-label="打印预览"><PreviewIcon /></Tool>
        </QuickItem>
        <Drop w={8} label="自定义快速访问工具栏" color="#f1f1f1" />
      </QuickAccess>

      <FormulaBar>
        <NameBox>
          <input type="text" aria-label="名称框" defaultValue="A1" />
          <Caret big />
        </NameBox>
        <Dots $w={30}><i /><i /><i /></Dots>
        <FormulaButtons>
          <Tool $w={36} aria-label="取消">
            <Icon w={11} h={11} stroke="#bbb" strokeWidth="2"><path d="M1 1l9 9M10 1l-9 9" /></Icon>
          </Tool>
          <Tool $w={36} aria-label="输入">
            <Icon w={13} h={11} stroke="#bbb" strokeWidth="2.500"><path d="M1 6l3.500 3.500L12 1" /></Icon>
          </Tool>
          <Tool $w={36} aria-label="插入函数">
            <Icon w={14} h={16} stroke="none" fontFamily="Liberation Serif" fontStyle="italic" fontWeight="700">
              <text x="2" y="12" fontSize="14" fill="#555">f</text>
              <text x="7" y="13" fontSize="11" fill="#555">x</text>
            </Icon>
          </Tool>
        </FormulaButtons>
        <FormulaField>
          <input type="text" aria-label="编辑栏" defaultValue="1" />
          <Icon w={8} h={6} strokeWidth="2"><path d="M1 1l4 4 4-4" /></Icon>
        </FormulaField>
      </FormulaBar>

      <Sheet />

      <SheetStrip>
        <SheetNav>
          <SheetNavArrow />
          <SheetNavArrow next />
        </SheetNav>
        {SHEETS.map((s) => (
          <SheetTab key={s.name} $bg={s.bg} $active={s.name === sheet} onClick={() => setSheet(s.name)}>
            <span>{s.name}</span>
          </SheetTab>
        ))}
        <AddSheet aria-label="新工作表">
          <Icon w={17} h={17} stroke="#777">
            <circle cx="8.500" cy="8.500" r="7.500" />
            <path d="M8.500 4.500v8M4.500 8.500h8" strokeWidth="2" />
          </Icon>
        </AddSheet>
        <SheetSpacer />
        <Dots $w={16}><i /><i /><i /></Dots>
        <HScroll>
          <HButton aria-label="向左滚动">
            <Icon w={4} h={8} stroke="none"><path d="M4 0v8L0 4z" fill="#555" /></Icon>
          </HButton>
          <HThumb />
          <HButton aria-label="向右滚动">
            <Icon w={4} h={8} stroke="none"><path d="M0 0l4 4-4 4z" fill="#555" /></Icon>
          </HButton>
        </HScroll>
      </SheetStrip>

      <StatusBar>
        <Mode>就绪</Mode>
        <Mode>数字</Mode>
        <Icon w={13} h={13}>
          <path d="M1.500 5v7.500h10v-9H6M3 7.500h7M3 9.500h7M3 11.500h7" strokeDasharray="2 1" />
          <path d="M6 1h6v3H6z" fill="#666" stroke="none" />
          <circle cx="3" cy="3" r="3" fill="#666" stroke="none" />
        </Icon>
        <Stats>
          <Average>平均值: 4.5</Average>
          <StatusText>计数: 12</StatusText>
          <StatusText>数值计数: 12</StatusText>
          <StatusText>最小值: 1</StatusText>
          <StatusText>最大值: 9</StatusText>
          <StatusText>求和: 54</StatusText>
        </Stats>
        <ViewButton $on aria-label="普通">
          <Icon w={13} h={13}><path d="M0.500 0.500h12v12h-12zM0.500 4.500h12M0.500 8.500h12M4.500 0.500v12M8.500 0.500v12" /></Icon>
        </ViewButton>
        <ViewButton aria-label="页面布局">
          <Icon w={13} h={13}><path d="M0.500 0.500h12v12h-12zM3.500 2.500h6v8h-6zM4 4.500h5M4 6.500h5M4 8.500h5" /></Icon>
        </ViewButton>
        <ViewButton aria-label="分页预览">
          <Icon w={13} h={13}><path d="M0.500 0.500h12v12h-12zM3.500 0.500v7h6v-7M6.500 0.500v7" /></Icon>
        </ViewButton>
        <ZoomControl>
          <ZoomButton aria-label="缩小">-</ZoomButton>
          <ZoomSlider
            type="range"
            aria-label="缩放"
            min="0"
            max="100"
            value={zoom}
            onChange={(e) => setZoom(Number(e.target.value))}
          />
          <ZoomButton aria-label="放大">+</ZoomButton>
          <ZoomValue>100%</ZoomValue>
        </ZoomControl>
      </StatusBar>

      <ImeBadge>
        CH
        <Icon w={11} h={12} stroke="#222" strokeWidth="1.200">
          <path d="M5 1c6 1 7 8 1 9.500-2 0.500-4 0-5-1C5 9 7 5 5 1zM2.500 3.500v1.500" />
        </Icon>
        简
      </ImeBadge>
      <Watermark>
        <Swoosh />
        <WatermarkText>
          <span>极光下载站</span>
          <span>www.xz7.com</span>
        </WatermarkText>
      </Watermark>
      <Pointer width="14" height="20" viewBox="0 0 14 20" aria-hidden="true">
        <path d="M1 1v14l3-3 2.500 6 3-1.200L7 11h5z" fill="#fff" stroke="#000" />
      </Pointer>
    </Window>
  );
}
